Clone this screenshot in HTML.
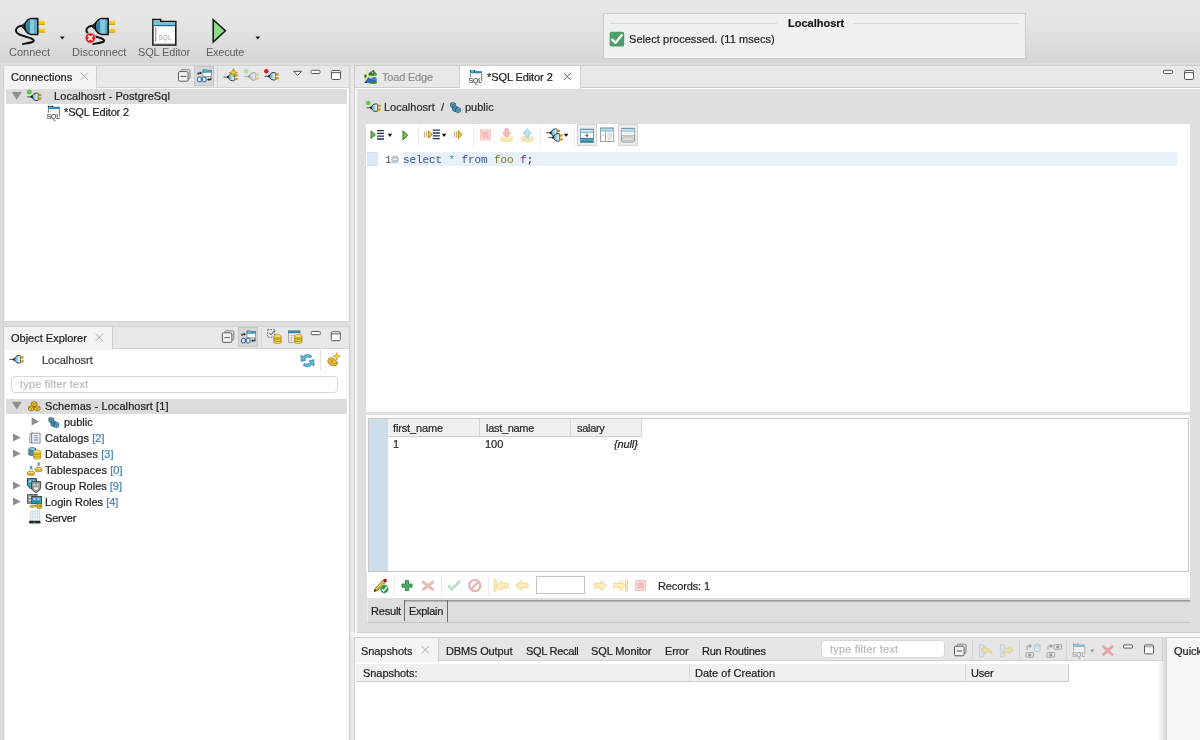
<!DOCTYPE html>
<html>
<head>
<meta charset="utf-8">
<title>Toad Edge</title>
<style>
*{box-sizing:border-box;margin:0;padding:0}
html,body{width:1200px;height:740px;overflow:hidden}
body{position:relative;background:#dedede;font-family:"Liberation Sans",sans-serif;font-size:11px;color:#1e1e1e;letter-spacing:0}
.abs{position:absolute}
.t{position:absolute;white-space:nowrap;line-height:14px;will-change:transform;-webkit-text-stroke:0.22px}
#topbar{position:absolute;left:0;top:0;width:1200px;height:63px;background:linear-gradient(#e8e8e8 0%,#e5e5e5 35%,#d5d5d5 100%)}
#topstrip{position:absolute;left:0;top:63px;width:1200px;height:2px;background:#dddddd}
.tbl{will-change:transform;position:absolute;top:46px;color:#5e5e5e;font-size:11px;letter-spacing:0;line-height:13px;white-space:nowrap}
.panel{position:absolute;background:#fff;border:1px solid #cdcdcd}
.tabbar{position:absolute;left:0;top:0;right:0;height:22px;background:#e8e8e8;border-bottom:1px solid #d2d2d2}
.tab{position:absolute;top:0;height:22px;background:#f4f4f4;border-right:1px solid #d0d0d0}
.row-sel{position:absolute;background:#dcdcdc;height:15px}
.gray{color:#8c8c8c}
.blue{color:#4484b6}
.hdr{position:absolute;background:#f0f0f0;border-bottom:1px solid #d0d0d0;height:18px}
.hsep{position:absolute;width:1px;background:#d6d6d6}
.filter{position:absolute;background:#fff;border:1px solid #d7d7d7;border-radius:4px}
.vsep{position:absolute;width:1px;background:#ececec}
.tog{position:absolute;background:#d7d7d7;border:1px solid #c6c6c6}
#icons{position:absolute;left:0;top:0;width:1200px;height:740px;pointer-events:none}
</style>
</head>
<body>

<!-- ================= TOP TOOLBAR ================= -->
<div id="topbar">
  <div class="tbl" style="left:9px">Connect</div>
  <div class="tbl" style="left:72px">Disconnect</div>
  <div class="tbl" style="left:138px;letter-spacing:-0.15px">SQL Editor</div>
  <div class="tbl" style="left:206px;letter-spacing:-0.25px">Execute</div>
  <!-- status box -->
  <div class="abs" id="status" style="left:603px;top:13px;width:423px;height:46px;background:#f0f0f0;border:1px solid #cbcbcb"></div>
  <div class="abs" style="left:610px;top:23px;width:167px;height:1px;background:#d9d9d9"></div>
  <div class="abs" style="left:853px;top:23px;width:166px;height:1px;background:#d9d9d9"></div>
  <div class="t" style="left:788px;top:16px;font-weight:bold;color:#1a1a1a;letter-spacing:0">Localhosrt</div>
  <div class="t" style="left:629px;top:32px;color:#262626;letter-spacing:0.06px">Select processed. (11 msecs)</div>
</div>
<div id="topstrip"></div>
<div class="abs" style="left:351px;top:65px;width:4px;height:675px;background:#e9e9e9"></div>
<div class="abs" style="left:351px;top:632px;width:849px;height:5px;background:#f9f9f9"></div>
<div class="abs" style="left:0;top:65px;width:4px;height:675px;background:linear-gradient(90deg,#dcdcdc 0,#dcdcdc 70%,#d2d2d2 90%,#e4e4e4 100%)"></div>

<!-- ================= CONNECTIONS PANEL ================= -->
<div class="panel" id="conn" style="left:4px;top:65px;width:346px;height:257px;border-color:#d2d2d2;border-left-color:#efefef">
  <div class="tabbar"></div>
  <div class="tab" style="left:0;width:92px;height:23px"></div>
  <div class="tog" style="left:189px;top:-0.5px;width:20px;height:20.5px"></div>
  <div class="vsep" style="left:212px;top:1px;height:20px;background:#d4d4d4"></div>
  <div class="t" style="left:5.5px;top:4px">Connections</div>
  <div class="row-sel" style="left:1px;top:23px;right:2px"></div>
  <div class="t" style="left:49px;top:23px;letter-spacing:0.07px">Localhosrt - PostgreSql</div>
  <div class="t" style="left:59px;top:39px;letter-spacing:-0.14px">*SQL Editor 2</div>
</div>

<!-- ================= OBJECT EXPLORER PANEL ================= -->
<div class="panel" id="objx" style="left:4px;top:326px;width:346px;height:420px;border-color:#d2d2d2;border-left-color:#efefef">
  <div class="tabbar"></div>
  <div class="tab" style="left:0;width:108px;height:23px"></div>
  <div class="tog" style="left:233px;top:-0.5px;width:20px;height:20.5px"></div>
  <div class="vsep" style="left:256px;top:1px;height:20px;background:#d4d4d4"></div>
  <div class="vsep" style="left:315px;top:23px;height:21px;background:#e2e2e2"></div>
  <div class="t" style="left:5.5px;top:4px">Object Explorer</div>
  <div class="t" style="left:37px;top:26px;color:#3a3a3a">Localhosrt</div>
  <div class="filter" style="left:6px;top:49px;width:327px;height:17px"></div>
  <div class="t" style="left:15px;top:50px;color:#bababa;letter-spacing:0.18px">type filter text</div>
  <div class="row-sel" style="left:1px;top:72px;right:2px"></div>
  <div class="t" style="left:40px;top:72px;letter-spacing:0.08px">Schemas - Localhosrt [1]</div>
  <div class="t" style="left:59px;top:88px">public</div>
  <div class="t" style="left:40px;top:103.5px;letter-spacing:0.08px">Catalogs <span class="blue">[2]</span></div>
  <div class="t" style="left:40px;top:119.5px;letter-spacing:0.05px">Databases <span class="blue">[3]</span></div>
  <div class="t" style="left:40px;top:135.5px;letter-spacing:0.08px">Tablespaces <span class="blue">[0]</span></div>
  <div class="t" style="left:40px;top:151.5px">Group Roles <span class="blue">[9]</span></div>
  <div class="t" style="left:40px;top:167.5px">Login Roles <span class="blue">[4]</span></div>
  <div class="t" style="left:40px;top:183.5px;letter-spacing:-0.2px">Server</div>
</div>

<!-- ================= EDITOR AREA ================= -->
<div class="panel" id="edit" style="left:354px;top:65px;width:850px;height:568px;background:#dfdfdf;border-color:#cdcdcd">
  <div class="abs" style="left:0;top:21px;width:850px;height:2px;background:#fdfdfd"></div>
  <div class="abs" style="left:0;top:22px;width:2px;height:545px;background:#f8f8f8"></div>
  <div class="tabbar" style="border-bottom:1px solid #cacaca;height:21.5px"></div>
  <div class="tab" style="left:0;width:105px;background:#e8e8e8;height:21px"></div>
  <div class="tab" style="left:105px;width:121px;background:#fefefe;height:23px"></div>
  <div class="t gray" style="left:27px;top:4px;letter-spacing:-0.2px">Toad Edge</div>
  <div class="t" style="left:132px;top:4px;letter-spacing:-0.09px">*SQL Editor 2</div>
  <div class="t" style="left:29px;top:34px;color:#2c2c2c">Localhosrt</div>
  <div class="t" style="left:86px;top:34px;color:#2c2c2c">/</div>
  <div class="t" style="left:110px;top:34px;color:#2c2c2c">public</div>
  <!-- editor toolbar + text -->
  <div class="abs" id="ed" style="left:11px;top:57.5px;width:824px;height:289.5px;background:#fff"></div>
  <div class="vsep" style="left:63px;top:59px;height:22px"></div>
  <div class="vsep" style="left:118px;top:59px;height:22px"></div>
  <div class="vsep" style="left:185px;top:59px;height:22px"></div>
  <div class="vsep" style="left:219px;top:59px;height:22px"></div>
  <div class="tog" style="left:222px;top:58px;width:20px;height:21.5px;background:#ececec;border-color:#d4d4d4"></div>
  <div class="tog" style="left:263px;top:58px;width:20px;height:21.5px;background:#ececec;border-color:#d4d4d4"></div>
  <div class="abs" style="left:12px;top:86px;width:11px;height:14px;background:#dde9f7;border-top:1px dotted #c6d6ea;border-bottom:1px dotted #c6d6ea"></div>
  <div class="abs" style="left:48px;top:86px;width:774px;height:14px;background:#e8f0fa"></div>
  <div class="t" style="left:30px;top:87px;font-family:'Liberation Mono',monospace;font-size:11px;color:#4a4a4a;letter-spacing:0;-webkit-text-stroke:0">1</div>
  <div class="t" id="code" style="left:48px;top:87px;font-family:'Liberation Mono',monospace;font-size:11px;letter-spacing:-0.1px;-webkit-text-stroke:0"><span style="color:#34588a">select</span> <span style="color:#3f9a62">*</span> <span style="color:#34588a">from</span> <span style="color:#7c7a22">foo</span> <span style="color:#7b2f7f">f</span><span style="color:#222">;</span></div>
  <!-- sash -->
  <div class="abs" style="left:11px;top:346px;width:824px;height:3px;background:#dfdfdf"></div><div class="abs" style="left:11px;top:349px;width:824px;height:157px;background:#fcfcfc"></div>
  <!-- result grid -->
  <div class="abs" id="grid" style="left:13px;top:352px;width:821px;height:154px;background:#fff;border:1px solid #c9c9c9"></div>
  <div class="abs" style="left:14px;top:353px;width:19px;height:152px;background:#cfdcea"></div>
  <div class="hdr" style="left:33px;top:353px;width:254px;height:18px"></div>
  <div class="hsep" style="left:124px;top:353px;height:17px"></div>
  <div class="hsep" style="left:215px;top:353px;height:17px"></div>
  <div class="hsep" style="left:286px;top:353px;height:17px"></div>
  <div class="t" style="left:38px;top:355px;color:#2a2a2a;letter-spacing:-0.14px">first_name</div>
  <div class="t" style="left:131px;top:355px;color:#2a2a2a;letter-spacing:-0.3px">last_name</div>
  <div class="t" style="left:222px;top:355px;color:#2a2a2a;letter-spacing:-0.3px">salary</div>
  <div class="t" style="left:38px;top:371px">1</div>
  <div class="t" style="left:130px;top:371px">100</div>
  <div class="t" style="left:259px;top:371px;font-style:italic;letter-spacing:-0.12px">{null}</div>
  <!-- nav bar -->
  <div class="abs" style="left:12px;top:506px;width:823px;height:26.3px;background:#fefefe"></div>
  <div class="vsep" style="left:39px;top:510px;height:20px"></div>
  <div class="vsep" style="left:86px;top:510px;height:20px"></div>
  <div class="vsep" style="left:133px;top:510px;height:20px"></div>
  <div class="abs" style="left:181px;top:510px;width:49px;height:18px;background:#fff;border:1px solid #c6c6c6"></div>
  <div class="t" style="left:303px;top:512.5px;color:#2a2a2a;letter-spacing:-0.12px">Records: 1</div>
  <!-- result tabs -->
  <div class="abs" style="left:12px;top:532.3px;width:823px;height:24.7px;background:#dedede;border-bottom:1px solid #c4c4c4;border-left:1px solid #ececec"></div>
  <div class="abs" style="left:50px;top:534px;width:785px;height:2px;background:linear-gradient(#8a8a8a,#c4c4c4)"></div>
  <div class="abs" style="left:49px;top:534px;width:1px;height:21px;background:#6a6a6a"></div>
  <div class="abs" style="left:92px;top:534px;width:1px;height:22px;background:#6a6a6a"></div>
  <div class="t" style="left:16px;top:538px;letter-spacing:-0.2px">Result</div>
  <div class="t" style="left:54px;top:538px;letter-spacing:-0.3px">Explain</div>
</div>

<!-- ================= BOTTOM PANEL ================= -->
<div class="panel" id="bot" style="left:354px;top:637px;width:809px;height:110px;border-color:#d0d0d0">
  <div class="tabbar" style="height:23px;background:#e6e6e6"></div>
  <div class="tab" style="left:0;width:84px;height:24px"></div>
  <div class="t" style="left:6px;top:6px;letter-spacing:-0.07px">Snapshots</div>
  <div class="t" style="left:91px;top:6px;letter-spacing:-0.14px">DBMS Output</div>
  <div class="t" style="left:171px;top:6px;letter-spacing:-0.27px">SQL Recall</div>
  <div class="t" style="left:236px;top:6px;letter-spacing:-0.09px">SQL Monitor</div>
  <div class="t" style="left:310px;top:6px;letter-spacing:-0.18px">Error</div>
  <div class="t" style="left:347px;top:6px;letter-spacing:-0.25px">Run Routines</div>
  <div class="filter" style="left:466px;top:2px;width:124px;height:18px"></div>
  <div class="t" style="left:475px;top:4px;color:#bababa;letter-spacing:0.18px">type filter text</div>
  <div class="vsep" style="left:617px;top:2px;height:20px;background:#d6d6d6"></div>
  <div class="vsep" style="left:664px;top:2px;height:20px;background:#d6d6d6"></div>
  <div class="vsep" style="left:711px;top:2px;height:20px;background:#d6d6d6"></div>
  <div class="hdr" style="left:1px;top:26px;width:713px"></div>
  <div class="hsep" style="left:334px;top:26px;height:17px"></div>
  <div class="hsep" style="left:610px;top:26px;height:17px"></div>
  <div class="hsep" style="left:713px;top:26px;height:17px"></div>
  <div class="t" style="left:8px;top:28px;letter-spacing:-0.06px">Snapshots:</div>
  <div class="t" style="left:340px;top:28px">Date of Creation</div>
  <div class="t" style="left:616px;top:28px;letter-spacing:-0.2px">User</div>
  <div class="abs" style="left:804px;top:24px;width:4px;height:90px;background:#f0f0f0"></div>
</div>

<!-- ================= QUICK PANEL ================= -->
<div class="panel" id="quick" style="left:1166px;top:637px;width:40px;height:110px;background:#f6f6f6;border-color:#d0d0d0">
  <div class="t" style="left:7px;top:6px">Quick</div>
</div>

<svg id="icons" viewBox="0 0 1200 740" width="1200" height="740">
<defs>
  <linearGradient id="gBody" x1="0" x2="1" y1="0" y2="0">
    <stop offset="0" stop-color="#3f8fae"/><stop offset="0.38" stop-color="#4a9cba"/><stop offset="0.4" stop-color="#84c9e0"/><stop offset="0.72" stop-color="#84c9e0"/><stop offset="0.74" stop-color="#5aa9c6"/><stop offset="1" stop-color="#5aa9c6"/>
  </linearGradient>
  <linearGradient id="gProng" x1="0" x2="0" y1="0" y2="1">
    <stop offset="0" stop-color="#f9d43a"/><stop offset="0.6" stop-color="#f3c21c"/><stop offset="1" stop-color="#c99a10"/>
  </linearGradient>
  <!-- big plug, origin = body top-left (24.6,18) -->
  <g id="bigplug">
    <path d="M-3.2,7.8 C-7.5,8.3 -10,11.5 -7.8,14.6 C-5,18.3 6.5,19 9,22 C10.5,24.2 4,25 -1.6,26" fill="none" stroke="#111" stroke-width="1.9" stroke-linecap="round"/>
    <path d="M-3.6,8.2 L1.2,4.2 L1.2,12.5 Z" fill="#2a2a2a" stroke="#111" stroke-width="1"/>
    <rect x="13.4" y="2.8" width="6.8" height="4.2" fill="url(#gProng)"/>
    <rect x="13.4" y="10.6" width="6.8" height="4.2" fill="url(#gProng)"/>
    <path d="M13.2,0.4 L6.2,0.4 C2.2,1.6 0.3,5.2 0.3,8.4 C0.3,11.6 2.2,15.2 6.2,16.4 L13.2,16.4 Z" fill="url(#gBody)" stroke="#111" stroke-width="1.5" stroke-linejoin="round"/>
    <path d="M5.2,2.6 C2.6,3.8 1.9,6.2 1.9,8.4 C1.9,10.6 2.6,13 5.2,14.2 Z" fill="#2f7f9c" opacity="0.85"/>
  </g>
  <!-- small plug, origin = body top-left ; body 7.4 x 8 -->
  <g id="plug">
    <path d="M-4.1,4.1 L-0.4,4.1" stroke="#666" stroke-width="1.2" fill="none"/>
    <path d="M-0.8,4.1 C-0.8,3.2 0.2,2.8 1.2,2.6 L1.2,5.6 C0.2,5.4 -0.8,5 -0.8,4.1 Z" fill="#0a0a0a"/>
    <rect x="6.8" y="1.4" width="3" height="1.8" fill="#d2a40c" stroke="#9c7a08" stroke-width="0.35"/>
    <rect x="6.8" y="5.1" width="3" height="1.8" fill="#d2a40c" stroke="#9c7a08" stroke-width="0.35"/>
    <path d="M6.6,0.4 L4.4,0.4 C2.2,0.6 1.1,2.4 1.1,4.05 C1.1,5.7 2.2,7.5 4.4,7.7 L6.6,7.7 Z" fill="#9fd6ea" stroke="#202020" stroke-width="0.9" stroke-linejoin="round"/>
    <path d="M3.6,1.4 C2.4,2 2,3.2 2,4.05 C2,4.9 2.4,6.1 3.6,6.7 C3,5.8 2.9,2.4 3.6,1.4 Z" fill="#6fb6d2"/>
    <rect x="4.9" y="0.9" width="1.5" height="6.3" fill="#f2fafd"/>
    <path d="M6.6,0.4 V7.7" stroke="#9a9a9a" stroke-width="0.6"/>
  </g>
  <!-- mini/max -->
  <g id="mini"><rect x="0.5" y="0.5" width="9" height="3.2" rx="0.8" fill="#fff" stroke="#5a5a5a" stroke-width="1"/></g>
  <g id="maxi"><rect x="0.5" y="0.5" width="9" height="9" rx="1.2" fill="#fff" stroke="#5a5a5a" stroke-width="1"/><path d="M0.5,2.6 H9.5" stroke="#5a5a5a" stroke-width="1"/></g>
  <g id="closex"><path d="M0,0 L7.5,7.5 M7.5,0 L0,7.5" stroke="#a8a8a8" stroke-width="0.9" fill="none"/></g>
  <g id="collapse">
    <path d="M3,2.6 V1.8 Q3,0.6 4.2,0.6 H10.8 Q12,0.6 12,1.8 V8.6 Q12,9.8 10.8,9.8 H10.2" fill="none" stroke="#6a6a6a" stroke-width="0.8"/>
    <rect x="0.5" y="2.6" width="9.6" height="9.6" rx="1.3" fill="#f3f3f3" stroke="#5a5a5a" stroke-width="1"/>
    <path d="M2.6,7.4 H8" stroke="#5e5e5e" stroke-width="1.1"/>
  </g>
  <g id="linked">
    <rect x="6" y="1.2" width="8.4" height="6.2" fill="#fff" stroke="#6a7c8a" stroke-width="0.7"/>
    <path d="M5.8,0.4 H9.6 L10.4,1.2 H14.6 V3.2 H5.8 Z" fill="#3fa6cc" stroke="#2a6a88" stroke-width="0.4"/>
    <path d="M7,1.6 H10" stroke="#a8dcee" stroke-width="0.6"/>
    <path d="M1,5.6 V3.9 H3.2" fill="none" stroke="#333" stroke-width="1.1"/><path d="M2.8,2.4 L5,3.9 L2.8,5.4 Z" fill="#111"/>
    <path d="M14,8.2 V10.4 H11.8" fill="none" stroke="#333" stroke-width="1.1"/><path d="M12.2,8.9 L10,10.4 L12.2,11.9 Z" fill="#222"/>
    <ellipse cx="2.5" cy="10.2" rx="2.1" ry="2.4" fill="#eef2f8" stroke="#3f6eb2" stroke-width="1.05"/>
    <ellipse cx="7.1" cy="10.2" rx="2.1" ry="2.4" fill="#eef2f8" stroke="#3f6eb2" stroke-width="1.05"/>
    <path d="M3.6,10.2 H6" stroke="#3f6eb2" stroke-width="1.2"/>
  </g>
  <g id="tri-r"><path d="M0,0 L7.6,4.1 L0,8.2 Z" fill="#8e8e8e"/></g>
  <g id="tri-d"><path d="M0,0 H10 L5,7.8 Z" fill="#8e8e8e"/></g>
  <g id="dd"><path d="M0,0 H4.6 L2.3,3.2 Z" fill="#111"/></g>
  <!-- small sql file icon 13x13 -->
  <g id="sqlfile">
    <rect x="0.4" y="1.1" width="11.9" height="2.5" fill="#2f86a6"/>
    <path d="M0.3,0.9 H5.3" stroke="#1c6a88" stroke-width="1.1" fill="none"/>
    <rect x="0.2" y="0.3" width="1" height="1" fill="#0a0a0a"/><rect x="4.4" y="0.3" width="1" height="1" fill="#0a0a0a"/>
    <path d="M1.2,1.7 H4.6" stroke="#8fd0e6" stroke-width="0.7"/>
    <rect x="0.9" y="3.6" width="10.9" height="5" fill="#fff"/>
    <path d="M0.8,3.6 V7.2" stroke="#5a5a5a" stroke-width="0.8" fill="none"/><path d="M12,3.6 V11" stroke="#5a5a5a" stroke-width="0.8" fill="none"/>
    <path d="M2.6,5.2 V6.6" stroke="#d0d0d0" stroke-width="0.9"/>
    <text x="-0.9" y="13.4" font-family="Liberation Sans, sans-serif" font-size="7" fill="#404040" stroke="#404040" stroke-width="0.15" textLength="13.2" lengthAdjust="spacingAndGlyphs">SQL</text>
  </g>
  <!-- yellow db cylinder 8x10 -->
  <g id="ydb">
    <path d="M0.4,1.8 V8.4 C0.4,9.7 7.8,9.7 7.8,8.4 V1.8" fill="#f2cc2e" stroke="#a88410" stroke-width="0.6"/>
    <ellipse cx="4.1" cy="1.8" rx="3.7" ry="1.5" fill="#fbe372" stroke="#a88410" stroke-width="0.6"/>
    <path d="M0.4,4 C0.4,5.3 7.8,5.3 7.8,4 M0.4,6.2 C0.4,7.5 7.8,7.5 7.8,6.2" fill="none" stroke="#8e6e08" stroke-width="0.8"/>
    <path d="M1.4,4.9 C2.6,5.5 5.6,5.5 6.8,4.9 M1.4,7.1 C2.6,7.7 5.6,7.7 6.8,7.1" fill="none" stroke="#fbe98e" stroke-width="0.5" transform="translate(0,0.9)"/>
  </g>
<g id="lines4"><path d="M0,0.6 H7 M0,3.4 H7 M0,6.2 H7 M0,9 H7" stroke="#1d2f5c" stroke-width="1.3" fill="none"/></g>
<g id="stopf"><rect x="0.5" y="0.5" width="10" height="10" fill="#f9dede" stroke="#efb4b4" stroke-width="0.8"/><rect x="2.2" y="2.2" width="6.6" height="6.6" fill="#f0bcbc"/></g>
<g id="disk"><path d="M0.4,2 V4.4 C0.4,6.2 11.6,6.2 11.6,4.4 V2" fill="#fbecb4" stroke="#ecd48a" stroke-width="0.6"/><ellipse cx="6" cy="2" rx="5.6" ry="2" fill="#fdf3c8" stroke="#ecd48a" stroke-width="0.6"/></g>
<g id="arrL"><path d="M0.4,5.6 L6.2,0.6 V3.4 H12.6 V7.8 H6.2 V10.6 Z" fill="#fbeebc" stroke="#ecd282" stroke-width="0.8" stroke-linejoin="round"/></g>
</defs>

<!-- ===== top toolbar ===== -->
<use href="#bigplug" x="24.6" y="18"/>
<use href="#bigplug" x="95" y="18"/>
<rect x="83" y="31" width="13" height="14" fill="#dadada" opacity="0"/>
<circle cx="90.3" cy="38" r="5.2" fill="#e8141c" stroke="#f4d0d0" stroke-width="0.8"/>
<path d="M88,35.7 L92.6,40.3 M92.6,35.7 L88,40.3" stroke="#fff" stroke-width="1.7" fill="none"/>
<use href="#dd" x="60" y="36.4"/>
<use href="#dd" x="255.5" y="36.4"/>
<!-- sql editor big -->
<path d="M152.9,45 V19.4 H160.6 V21.4 H175.8 V45 Z" fill="#fff" stroke="#111" stroke-width="1.5" stroke-linejoin="miter"/>
<path d="M153.6,20.2 H159.9 V22.2 H175.1 V25 H153.6 Z" fill="#74c0d8"/>
<path d="M153.6,25.6 H175.1" stroke="#1f6e88" stroke-width="1.2"/>
<rect x="155" y="27.4" width="1.3" height="14.2" fill="#9a9a9a"/>
<text x="158.4" y="40.2" font-family="Liberation Sans, sans-serif" font-size="6.4" fill="#a4a4a4" letter-spacing="0.2">SQL</text>
<path d="M153.6,44.1 H175.1" stroke="#6a6a6a" stroke-width="0.8"/>
<!-- execute -->
<path d="M213.2,19.8 V42 L225.4,30.8 Z" fill="#8fdb86" stroke="#111" stroke-width="1.5" stroke-linejoin="miter"/>
<!-- status check -->
<rect x="609.6" y="31.8" width="14.6" height="14.6" rx="1.6" fill="#4f9e68"/>
<path d="M612.2,39.6 L615.6,42.8 L621.6,35.2" fill="none" stroke="#fff" stroke-width="2.3" stroke-linecap="round" stroke-linejoin="round"/>

<!-- ===== connections panel ===== -->
<use href="#closex" x="80.5" y="72.5"/>
<use href="#collapse" x="178" y="69"/>
<use href="#linked" x="197" y="69.2"/>
<!-- new connection -->
<g opacity="0.95"><use href="#plug" x="227.6" y="73"/></g>
<path d="M233.4,68.6 L234.5,71.6 L237.6,72.6 L234.5,73.7 L233.4,76.8 L232.3,73.7 L229.2,72.6 L232.3,71.6 Z" fill="#f3c92e" stroke="#9c7a10" stroke-width="0.6"/>
<!-- connect (faded) -->
<g opacity="0.42"><use href="#plug" x="248.6" y="72.4"/></g>
<circle cx="246.2" cy="71.2" r="2.2" fill="#a9dca0"/>
<!-- disconnect -->
<use href="#plug" x="268.6" y="72.2"/>
<circle cx="266.3" cy="71.2" r="2.2" fill="#e5141c"/>
<!-- view menu -->
<path d="M293.6,71.3 H301.6 L297.6,75.4 Z" fill="#fff" stroke="#4e4e4e" stroke-width="1" stroke-linejoin="miter"/>
<use href="#mini" x="310.5" y="69.8"/>
<use href="#maxi" x="331" y="70"/>
<!-- tree -->
<use href="#tri-d" x="11.7" y="92"/>
<use href="#plug" x="31.3" y="92.7"/>
<circle cx="29.3" cy="92" r="2.5" fill="#4fd23c"/>
<use href="#sqlfile" x="47.6" y="105.6"/>

<!-- ===== editor panel tabs ===== -->
<use href="#mini" x="1163" y="69.8"/>
<use href="#maxi" x="1184" y="70"/>
<use href="#sqlfile" x="469.6" y="70"/>
<path d="M563.9,73.1 L570.7,79.9 M570.7,73.1 L563.9,79.9" stroke="#4c4c4c" stroke-width="0.9" fill="none"/>
<!-- toad icon -->
<g>
  <path d="M365.6,78 C367.4,76.6 369.6,77.2 371,78.4 C372.6,76.8 375.4,76.6 376.4,78 L376.6,82.4 L370.6,83 L364.8,82.6 Z" fill="#2f63c4"/>
  <path d="M372.4,77.4 C374,76.6 375.8,76.8 376.4,78 L376.5,81 C375.2,80 373.4,79.6 372.6,80.2 Z" fill="#3f86d8"/>
  <path d="M364.6,81.4 L367.2,82.2 L366.6,83 L364.6,82.8 Z" fill="#0c0c66"/>
  <path d="M368.6,82.4 C371,81.8 374.6,81.6 376.6,81.4 L376.8,83.6 C374.6,84.2 371.4,83.8 369,83.4 Z" fill="#3e8a2c"/>
  <path d="M368.6,73.6 C369,71.8 371,71.8 371.8,71.2 C372.4,69.8 373.8,69.6 374.2,70.8 C374.6,72 376.6,73 377,74.6 C376.8,75.8 374.6,76.2 372.4,76 C370.6,76 369,76.2 368.4,75.6 Z" fill="#3d8a30"/>
  <path d="M369.4,73.8 C370.4,73.2 371.4,73.2 372,73.8 C371.6,74.6 370.4,74.8 369.4,74.4 Z M373,70.4 C373.6,70 374.2,70.4 374,71.2 C373.6,71.4 373,71.2 373,70.4 Z" fill="#1f5220"/>
  <circle cx="372.6" cy="72.4" r="0.6" fill="#d8c8e8"/>
  <path d="M374.4,74.2 C375.4,73.8 376.6,74.2 376.8,74.8 C376,75.6 374.8,75.6 374,75.2 Z" fill="#86a83a"/>
  <path d="M364.2,75.6 C364.6,74.2 366,73.8 366.8,74.6 L367.2,77.4 C366.2,78.4 364.6,78 364.2,77 Z" fill="#3d8a30"/>
  <circle cx="366.3" cy="76.3" r="0.9" fill="#0c2c10"/>
  <path d="M368,76 C369.6,75.6 372,75.8 373.6,76 C372.8,77.4 371.6,78.6 370.6,78.8 C369.4,78.4 368.4,77.2 368,76 Z" fill="#d6e88c"/>
  <path d="M366.2,69.2 L367.8,69.2 L367.9,75.4 L368.6,76.6 L364.8,82.6 L363.8,81.6 L366.5,76.4 Z" fill="#e2ec9a"/>
</g>
<!-- breadcrumb -->
<use href="#plug" x="370.6" y="103.6"/>
<circle cx="368.2" cy="103" r="2.3" fill="#4fd23c"/>
<g id="bluecubes" transform="translate(450,102)">
  <path d="M2.4,0.4 L5.4,1.4 L5.4,4.6 L2.4,5.8 L0.4,4.4 L0.4,1.4 Z" fill="#5fa9c9" stroke="#1e4f66" stroke-width="0.7"/>
  <path d="M2.6,5 L5.8,3.8 L8,5.2 L8,8.6 L5,9.8 L2.6,8.4 Z" fill="#4b98ba" stroke="#1e4f66" stroke-width="0.7"/>
  <path d="M5.8,6.4 L8.6,5.4 L10.4,6.6 L10.4,9.6 L7.8,10.8 L5.8,9.6 Z" fill="#6ab4d2" stroke="#1e4f66" stroke-width="0.7"/>
  <path d="M0.6,1.6 L2.6,2.8 L5.2,1.6 M2.6,2.8 V5.4 M2.8,5.4 L5.2,6.6 L7.8,5.4 M5.2,6.6 V9.4 M6,6.8 L8,7.8 L10.2,6.8 M8,7.8 V10.4" fill="none" stroke="#1e4f66" stroke-width="0.5"/>
</g>

<!-- ===== object explorer ===== -->
<use href="#closex" x="95.5" y="333.6"/>
<use href="#collapse" x="221.8" y="330.2"/>
<use href="#linked" x="241" y="330.4"/>
<!-- dashed check + db -->
<rect x="267.6" y="329.6" width="7" height="7.6" fill="none" stroke="#444" stroke-width="0.8" stroke-dasharray="1.6,1.2"/>
<path d="M269.4,333 L271,334.8 L274.6,330.6" fill="none" stroke="#333" stroke-width="0.9"/>
<use href="#ydb" x="273.4" y="334.2"/>
<!-- table + db -->
<rect x="288.4" y="331.4" width="11.6" height="11" fill="#fff" stroke="#8a8a8a" stroke-width="0.7"/>
<rect x="288.4" y="330.8" width="11.6" height="2.2" fill="#2f93b4" stroke="#4a6a78" stroke-width="0.4"/>
<path d="M288.4,335.6 H300 M288.4,338 H300 M288.4,340.4 H300 M291.4,333 V342.4 M294.4,333 V342.4" stroke="#9a9a9a" stroke-width="0.5" fill="none"/>
<use href="#ydb" x="294.2" y="334.2"/>
<use href="#mini" x="310.8" y="331"/>
<use href="#maxi" x="330.8" y="331.2"/>
<!-- header row -->
<use href="#plug" x="13.6" y="355.3"/>
<!-- refresh -->
<g fill="#5cb6d6" stroke="#1f6f93" stroke-width="0.6" stroke-linejoin="round">
  <path id="refA" d="M300.8,355.3 L301.2,361.6 L306,360.2 L304.6,358.6 C306.4,356.9 309,356.7 310.6,357.9 L311.7,356 C309,353.8 305,354 303,356.6 Z"/>
  <path d="M300.8,355.3 L301.2,361.6 L306,360.2 L304.6,358.6 C306.4,356.9 309,356.7 310.6,357.9 L311.7,356 C309,353.8 305,354 303,356.6 Z" transform="rotate(180 307.5 360.6)"/>
</g>
<!-- schema new -->
<g transform="translate(327.4,357)">
  <path d="M3.2,0.6 L6.2,1.6 L8.6,3.4 L10.4,6 L8.8,8.4 L5.6,8.8 L2.4,7.6 L0.4,5.2 L0.8,2.4 Z" fill="#ecc030" stroke="#8a6a10" stroke-width="0.7"/>
  <path d="M2.4,2.6 L4.4,4 L6.6,3 M4.4,4 V6.6 M5.4,6 L7.4,7 L9.4,6 M1.6,5 L3.4,6.4" fill="none" stroke="#8a6a10" stroke-width="0.5"/>
</g>
<path d="M336.6,352.6 L337.5,355.4 L340.4,356.2 L337.5,357.1 L336.6,360 L335.7,357.1 L332.8,356.2 L335.7,355.4 Z" fill="#f6d040" stroke="#9c7a10" stroke-width="0.5"/>
<!-- tree -->
<use href="#tri-d" x="11.8" y="401.8"/>
<g id="schemas" transform="translate(28.2,401.2)">
  <path d="M6,0.3 L8.8,1.4 L8.8,4.2 L6,5.4 L3.2,4.2 L3.2,1.4 Z" fill="#f0c832" stroke="#806010" stroke-width="0.7"/>
  <path d="M3,4.6 L5.8,5.7 L5.8,8.5 L3,9.7 L0.3,8.5 L0.3,5.7 Z" fill="#f0c832" stroke="#806010" stroke-width="0.7"/>
  <path d="M9,4.6 L11.8,5.7 L11.8,8.5 L9,9.7 L6.2,8.5 L6.2,5.7 Z" fill="#f0c832" stroke="#806010" stroke-width="0.7"/>
  <path d="M3.4,1.6 L6,2.6 L8.6,1.6 M6,2.6 V5 M0.6,5.9 L3,6.9 L5.6,5.9 M3,6.9 V9.4 M6.4,5.9 L9,6.9 L11.6,5.9 M9,6.9 V9.4" fill="none" stroke="#806010" stroke-width="0.5"/>
</g>
<use href="#tri-r" x="31.6" y="417.4"/>
<use href="#bluecubes" x="-401.6" y="315"/>
<use href="#tri-r" x="13" y="433.4"/>
<use href="#tri-r" x="13" y="449.4"/>
<use href="#tri-r" x="13" y="481.4"/>
<use href="#tri-r" x="13" y="497.4"/>
<!-- catalogs -->
<g transform="translate(29,431.2)">
  <path d="M2.4,0.4 L3.6,2" stroke="#666" stroke-width="0.7" fill="none"/>
  <path d="M0.8,2.4 H2.8 V11.6 H0.8 Z" fill="#f4f4f4" stroke="#7a7a7a" stroke-width="0.7"/>
  <rect x="2.8" y="2" width="8.2" height="9.8" fill="#fff" stroke="#6a6a6a" stroke-width="0.8"/>
  <path d="M4.6,4.4 H9.4 M4.6,6.2 H9.4 M4.6,8 H9.4 M4.6,9.6 H9.4" stroke="#5a80c8" stroke-width="0.8"/>
</g>
<!-- databases -->
<g transform="translate(28.4,447.2)">
  <path d="M0.4,1.8 V7.4 C0.4,8.6 7.4,8.6 7.4,7.4 V1.8" fill="#58a7c8" stroke="#1f5f7c" stroke-width="0.7"/>
  <ellipse cx="3.9" cy="1.8" rx="3.5" ry="1.4" fill="#9ad0e6" stroke="#1f5f7c" stroke-width="0.7"/>
  <path d="M0.4,3.8 C0.4,5 7.4,5 7.4,3.8 M0.4,5.8 C0.4,7 7.4,7 7.4,5.8" fill="none" stroke="#1f5f7c" stroke-width="0.6"/>
  <use href="#ydb" x="4.6" y="2.6"/>
</g>
<!-- tablespaces -->
<g transform="translate(27,462)">
  <rect x="10.6" y="0.4" width="2.2" height="3" fill="#3f9fc6"/><rect x="10.4" y="3.4" width="2.6" height="3.4" fill="#f0f0f0" stroke="#9a9a9a" stroke-width="0.4"/>
  <path d="M8,6.8 V8.8 C8,10 15,10 15,8.8 V6.8" fill="#ecc030" stroke="#9a7410" stroke-width="0.6"/><ellipse cx="11.5" cy="6.8" rx="3.5" ry="1.3" fill="#f8dc6a" stroke="#9a7410" stroke-width="0.6"/>
  <rect x="3" y="4" width="2.2" height="3" fill="#3f9fc6"/><rect x="2.8" y="7" width="2.6" height="3.4" fill="#f0f0f0" stroke="#9a9a9a" stroke-width="0.4"/>
  <path d="M0.4,10.6 V12.6 C0.4,13.8 7.4,13.8 7.4,12.6 V10.6" fill="#ecc030" stroke="#9a7410" stroke-width="0.6"/><ellipse cx="3.9" cy="10.6" rx="3.5" ry="1.3" fill="#f8dc6a" stroke="#9a7410" stroke-width="0.6"/>
</g>
<!-- group roles -->
<g transform="translate(27,478)">
  <path d="M0.5,0.5 H9.5 V6 C9.5,9 7,10.6 5,11.2 C3,10.6 0.5,9 0.5,6 Z" fill="#3f9fc6" stroke="#3a3a3a" stroke-width="0.9"/>
  <circle cx="3.2" cy="3.4" r="0.9" fill="#e6f2f8"/><circle cx="6.8" cy="3.4" r="0.9" fill="#e6f2f8"/>
  <path d="M4.6,3.6 H13.6 V9 C13.6,12 11.2,13.8 9.1,14.4 C7,13.8 4.6,12 4.6,9 Z" fill="#9c9c9c" stroke="#3a3a3a" stroke-width="0.9"/>
  <circle cx="7.4" cy="6.8" r="0.9" fill="#e8e8e8"/><circle cx="10.8" cy="6.8" r="0.9" fill="#e8e8e8"/>
  <path d="M6.8,9.4 C7.6,12.4 10.6,12.4 11.4,9.4 Z" fill="#fff"/>
</g>
<!-- login roles -->
<g transform="translate(27,494)">
  <rect x="0.5" y="0.6" width="9.6" height="8.6" fill="#8e8e8e" stroke="#4a4a4a" stroke-width="0.8"/>
  <rect x="2" y="2.4" width="1.8" height="1.6" fill="#e4e4e4"/><rect x="2" y="5.6" width="1.8" height="1.6" fill="#e4e4e4"/>
  <rect x="4.8" y="2.4" width="9.8" height="7.4" fill="#3f9fc6" stroke="#3a3a3a" stroke-width="0.8"/>
  <rect x="6.6" y="4.2" width="1.8" height="1.6" fill="#d8ecf4"/><rect x="10.6" y="4.2" width="1.8" height="1.6" fill="#d8ecf4"/>
  <path d="M6.4,7 C7.8,8.6 11.2,8.6 12.6,7" fill="none" stroke="#1f4f66" stroke-width="0.8"/>
  <circle cx="12.4" cy="12.2" r="2.5" fill="#ecc030" stroke="#8a6a10" stroke-width="0.7"/><circle cx="13" cy="12.2" r="0.8" fill="#7a5c08"/>
  <path d="M10,11.6 H3.6 L2.6,12.6 L3.8,13.4 L5,12.8 L6.2,13.6 L7.4,12.8 H10 Z" fill="#ecc030" stroke="#8a6a10" stroke-width="0.6"/>
</g>
<!-- server -->
<g transform="translate(29,510.6)">
  <path d="M1.8,0.4 H10.6 L10.8,10 H1 Z" fill="#eef5f8" stroke="#b8c4cc" stroke-width="0.6"/>
  <path d="M3.8,0.6 L3.4,10 M6.4,0.6 L6.2,10 M8.6,0.6 L8.6,10 M1.6,3.4 H10.7 M1.4,6.6 H10.7" stroke="#c6dce6" stroke-width="0.6" fill="none"/>
  <path d="M0.2,10.2 H11.4 V12.8 H0.2 Z" fill="#222"/>
  <rect x="4.8" y="11" width="1.4" height="1" fill="#3fd23c"/>
  <path d="M0.2,13.2 H11.4" stroke="#9a9a9a" stroke-width="0.5"/>
</g>

<!-- ===== editor toolbar ===== -->

<path d="M371,130.8 V138.6 L375.4,134.7 Z" fill="#6fb84f" stroke="#2f7a1f" stroke-width="0.9" stroke-linejoin="round"/>
<use href="#lines4" x="377" y="130"/>
<use href="#dd" x="387.6" y="133.8"/>
<path d="M403,130.8 V139.8 L407.8,135.3 Z" fill="#7cc257" stroke="#2f7a1f" stroke-width="1" stroke-linejoin="round"/>
<path d="M424.4,131.4 V137.4 M426.4,131.4 V137.4" stroke="#b9a06a" stroke-width="0.9"/>
<path d="M428.4,130.8 V138.2 L432.4,134.5 Z" fill="#f5c62c" stroke="#a07a10" stroke-width="0.8" stroke-linejoin="round"/>
<use href="#lines4" x="432.8" y="129.6"/>
<use href="#dd" x="441.8" y="133.8"/>
<path d="M454.4,131.4 V137.4 M456.4,131.4 V137.4" stroke="#b9a06a" stroke-width="0.9"/>
<path d="M458.2,130.6 V138.4 L462.2,134.5 Z" fill="#f5c62c" stroke="#a07a10" stroke-width="0.8" stroke-linejoin="round"/>
<!-- stop faded -->

<use href="#stopf" x="479.8" y="129.4"/>
<!-- commit / rollback -->

<use href="#disk" x="500.6" y="135.8"/>
<path d="M504.8,128.8 H508.4 V132.6 H510.8 L506.6,137.6 L502.4,132.6 H504.8 Z" fill="#f2bcbc" stroke="#e49a9a" stroke-width="0.6"/>
<use href="#disk" x="521.2" y="135.8"/>
<path d="M525.4,138 H529 V133.4 H531.4 L527.2,128.4 L523,133.4 H525.4 Z" fill="#bfe1ee" stroke="#8ec4da" stroke-width="0.6"/>
<!-- two plugs -->
<use href="#plug" x="550.2" y="128.6"/>
<use href="#plug" x="552.6" y="133.4"/>
<use href="#dd" x="563.8" y="133.8"/>
<!-- layout toggles -->
<g transform="translate(580,128.8)">
  <rect x="0.4" y="0.4" width="13" height="13" fill="#fff" stroke="#5f8ea6" stroke-width="0.8"/>
  <rect x="0.8" y="0.8" width="12.2" height="2.4" fill="#dff0f7"/><path d="M0.4,0.6 H13.4 M0.4,3.4 H13.4" stroke="#3f86a6" stroke-width="0.8"/>
  <rect x="0.8" y="9.8" width="12.2" height="3.4" fill="#4fa0bc"/><path d="M0.4,9.6 H13.4 M0.4,13.2 H13.4" stroke="#1f5f7c" stroke-width="0.8"/>
  <path d="M6.9,4.2 V7" stroke="#666" stroke-width="0.9"/><path d="M5,6.2 H8.8 L6.9,8.4 Z" fill="#666"/>
</g>
<g transform="translate(600,127.6)">
  <rect x="0.4" y="0.4" width="13.4" height="13.4" fill="#fff" stroke="#8a8a8a" stroke-width="0.8"/>
  <rect x="0.8" y="0.8" width="12.6" height="2.4" fill="#b8dcea"/><path d="M0.4,0.6 H13.8 M0.4,3.4 H13.8" stroke="#4f94b4" stroke-width="0.7"/>
  <path d="M5.6,3.4 V13.6" stroke="#9ab0c8" stroke-width="1"/>
  <path d="M7.6,5.4 H12 M7.6,7.4 H12 M7.6,9.4 H12 M7.6,11.4 H12 M2,7.4 H4" stroke="#c4c4c4" stroke-width="0.9"/>
</g>
<g transform="translate(621,128)">
  <rect x="0.4" y="0.4" width="13.2" height="13.6" rx="1" fill="#f4f4f4" stroke="#7f7f7f" stroke-width="0.8"/>
  <rect x="0.8" y="0.8" width="12.4" height="2.2" fill="#c4e2ee"/><path d="M0.4,0.6 H13.6 M0.4,3.4 H13.6" stroke="#4f94b4" stroke-width="0.7"/>
  <rect x="0.8" y="3.8" width="12.4" height="3.6" fill="#fff"/>
  <path d="M2,5.6 H12" stroke="#c8c8c8" stroke-width="0.8" stroke-dasharray="1.2,0.8"/>
  <path d="M0.4,7.8 H13.6" stroke="#8a8a8a" stroke-width="0.7"/>
  <rect x="1.6" y="9" width="10.8" height="3.6" rx="1.6" fill="#e6e6e6" stroke="#9a9a9a" stroke-width="0.6"/>
  <path d="M3,10.8 H11" stroke="#bdbdbd" stroke-width="0.9" stroke-dasharray="1.2,0.8"/>
</g>
<!-- fold marker -->
<circle cx="395" cy="159.4" r="3.9" fill="#b9c6cf"/><path d="M392.8,159.4 H397.2" stroke="#fff" stroke-width="1.1"/>

<!-- ===== nav bar ===== -->
<g>
  <path d="M374.2,591.4 L375.4,588.2 L383.6,579.6 L386,581.8 L377.6,590.4 Z" fill="#c9a432" stroke="#6e5614" stroke-width="0.7" stroke-linejoin="round"/>
  <path d="M376.4,588.6 L384,580.8" stroke="#f0d868" stroke-width="1" fill="none"/>
  <circle cx="385.2" cy="580.5" r="1.7" fill="#9c1c12"/>
  <path d="M374,591.7 L374.9,589.4 L376.4,590.8 Z" fill="#0a0a0a"/>
  <circle cx="384.3" cy="589" r="4.4" fill="#2f9a4c" stroke="#e4f2e6" stroke-width="0.6"/>
  <path d="M381.8,589.2 L383.6,591 L387,587" fill="none" stroke="#fff" stroke-width="1.4"/>
</g>
<path d="M405.4,580.6 H408.6 V584 H412 V587.2 H408.6 V590.6 H405.4 V587.2 H402 V584 H405.4 Z" fill="#4fa96c" stroke="#238c40" stroke-width="0.9"/>
<path d="M423.4,580.8 L428,584.2 L432.6,580.8 L434,582.4 L430,585.8 L434,589.2 L432.6,590.8 L428,587.4 L423.4,590.8 L422,589.2 L426,585.8 L422,582.4 Z" fill="#ecbcb8" stroke="#e4a8a4" stroke-width="0.5"/>
<path d="M447.4,586.4 L449.2,584.8 L452,587.6 L458.8,580.6 L460.4,582 L452,590.8 Z" fill="#bfe0c6" stroke="#a8d2b2" stroke-width="0.5"/>
<circle cx="474.8" cy="585.6" r="5.6" fill="none" stroke="#e4b4b4" stroke-width="2.2"/><path d="M471,589.6 L478.6,581.6" stroke="#e4b4b4" stroke-width="2.2"/>

<rect x="494.2" y="580" width="2" height="11.2" fill="#fbeebc" stroke="#ecd282" stroke-width="0.7"/>
<use href="#arrL" x="495.6" y="580"/>
<use href="#arrL" x="515.2" y="580"/>
<g transform="translate(607.2,0) scale(-1,1)"><use href="#arrL" x="0" y="580"/></g>
<g transform="translate(626.4,0) scale(-1,1)"><use href="#arrL" x="0" y="580"/></g>
<rect x="625.6" y="580" width="2" height="11.2" fill="#fbeebc" stroke="#ecd282" stroke-width="0.7"/>
<use href="#stopf" x="635.2" y="580"/>

<!-- ===== bottom panel ===== -->
<use href="#closex" x="421.5" y="646"/>
<use href="#collapse" x="954" y="643.6"/>
<g opacity="0.55">
  <path d="M979.4,644.4 L984,645.6 V656 L979.4,657.2 Z" fill="#cfe0ee" stroke="#8ab0d0" stroke-width="0.7"/>
  <path d="M981.4,649.8 L985.6,646 V648.2 C990,648 992.2,650.6 992,654.6 C991,652.2 989,651.6 985.6,651.6 V653.8 Z" fill="#f4d878" stroke="#d4ae40" stroke-width="0.7" stroke-linejoin="round"/>
  <path d="M1000.4,644.4 L1005,645.6 V656 L1000.4,657.2 Z" fill="#cfe0ee" stroke="#8ab0d0" stroke-width="0.7"/>
  <path d="M1013.4,649.8 L1009.2,646 V648.2 C1004.8,648 1002.6,650.6 1002.8,654.6 C1003.8,652.2 1005.8,651.6 1009.2,651.6 V653.8 Z" fill="#f4d878" stroke="#d4ae40" stroke-width="0.7" stroke-linejoin="round"/>
</g>
<g opacity="0.5" fill="none" stroke="#555" stroke-width="0.9">
  <path d="M1027,650 V646 H1030"/><path d="M1029.6,644.4 L1031.6,646 L1029.6,647.6 Z" fill="#555"/>
  <path d="M1034.6,645 V650.6 C1034.6,652 1040,652 1040,650.6 V645" fill="#d8ecf6" stroke="#5f9fc0"/><ellipse cx="1037.3" cy="645" rx="2.7" ry="1.1" fill="#eaf5fa" stroke="#5f9fc0"/>
  <rect x="1026" y="652.6" width="7.6" height="4.6" rx="0.6"/><circle cx="1029.8" cy="655" r="1.2" fill="#555"/>
  <path d="M1048,650 V646 H1051"/><path d="M1050.6,644.4 L1052.6,646 L1050.6,647.6 Z" fill="#555"/>
  <rect x="1054" y="644.6" width="7.6" height="4.6" rx="0.6"/><circle cx="1057.8" cy="647" r="1.2" fill="#555"/>
  <rect x="1047" y="652.6" width="7.6" height="4.6" rx="0.6"/><circle cx="1050.8" cy="655" r="1.2" fill="#555"/>
</g>
<g opacity="0.45"><use href="#sqlfile" x="1072.8" y="643.4"/></g>
<path d="M1090,649.6 H1094.4 L1092.2,652.6 Z" fill="#9a9a9a"/>
<path d="M1103.4,645.2 L1107.8,648.8 L1112.2,645.2 L1113.6,646.8 L1109.6,650.6 L1113.6,654.4 L1112.2,656 L1107.8,652.4 L1103.4,656 L1102,654.4 L1106,650.6 L1102,646.8 Z" fill="#dca8a8" stroke="#d49a9a" stroke-width="0.4"/>
<use href="#mini" x="1123" y="644.4"/>
<g transform="translate(1144,644.4)"><rect x="0.5" y="0.5" width="9" height="9" rx="1" fill="#fff" stroke="#5a5a5a" stroke-width="1"/><rect x="1" y="1" width="8" height="2" fill="#b4b4b4"/></g>
</svg>

</body>
</html>
